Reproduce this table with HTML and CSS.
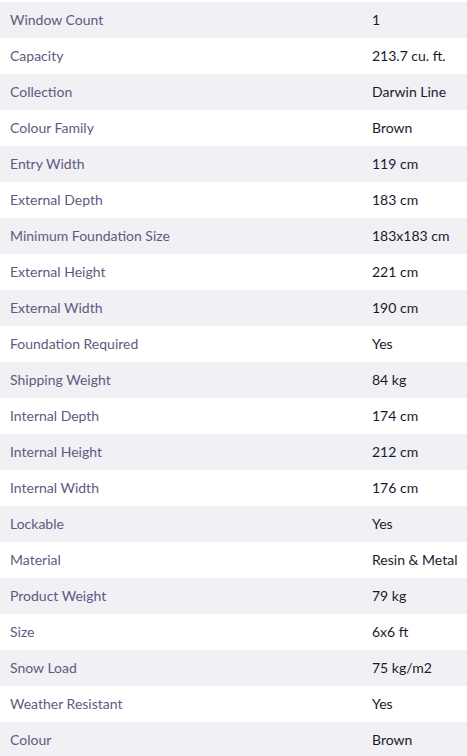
FILE: index.html
```html
<!DOCTYPE html>
<html>
<head>
<meta charset="utf-8">
<link rel="stylesheet" href="styles.css">
</head>
<body>
<div class="specs">
  <div class="row"><div class="label">Window Count</div><div class="value">1</div></div>
  <div class="row"><div class="label">Capacity</div><div class="value">213.7 cu. ft.</div></div>
  <div class="row"><div class="label">Collection</div><div class="value">Darwin Line</div></div>
  <div class="row"><div class="label">Colour Family</div><div class="value">Brown</div></div>
  <div class="row"><div class="label">Entry Width</div><div class="value">119 cm</div></div>
  <div class="row"><div class="label">External Depth</div><div class="value">183 cm</div></div>
  <div class="row"><div class="label">Minimum Foundation Size</div><div class="value">183x183 cm</div></div>
  <div class="row"><div class="label">External Height</div><div class="value">221 cm</div></div>
  <div class="row"><div class="label">External Width</div><div class="value">190 cm</div></div>
  <div class="row"><div class="label">Foundation Required</div><div class="value">Yes</div></div>
  <div class="row"><div class="label">Shipping Weight</div><div class="value">84 kg</div></div>
  <div class="row"><div class="label">Internal Depth</div><div class="value">174 cm</div></div>
  <div class="row"><div class="label">Internal Height</div><div class="value">212 cm</div></div>
  <div class="row"><div class="label">Internal Width</div><div class="value">176 cm</div></div>
  <div class="row"><div class="label">Lockable</div><div class="value">Yes</div></div>
  <div class="row"><div class="label">Material</div><div class="value">Resin &amp; Metal</div></div>
  <div class="row"><div class="label">Product Weight</div><div class="value">79 kg</div></div>
  <div class="row"><div class="label">Size</div><div class="value">6x6 ft</div></div>
  <div class="row"><div class="label">Snow Load</div><div class="value">75 kg/m2</div></div>
  <div class="row"><div class="label">Weather Resistant</div><div class="value">Yes</div></div>
  <div class="row"><div class="label">Colour</div><div class="value">Brown</div></div>
</div>
</body>
</html>
```
FILE: styles.css
```css
html, body {
  margin: 0;
  padding: 0;
  background: #ffffff;
}
body {
  font-family: "Lato", "Liberation Sans", sans-serif;
  font-size: 14px;
  padding-top: 2px;
}
.specs {
  display: flex;
  flex-direction: column;
}
.row {
  display: grid;
  grid-template-columns: 362px 1fr;
  height: 36px;
  align-items: center;
}
.row:nth-child(odd) {
  background: #f1f0f5;
}
.label {
  padding-left: 10px;
  padding-bottom: 2px;
  color: #5f5a80;
}
.value {
  padding-left: 10px;
  padding-bottom: 2px;
  color: #1b1a2b;
}
```
